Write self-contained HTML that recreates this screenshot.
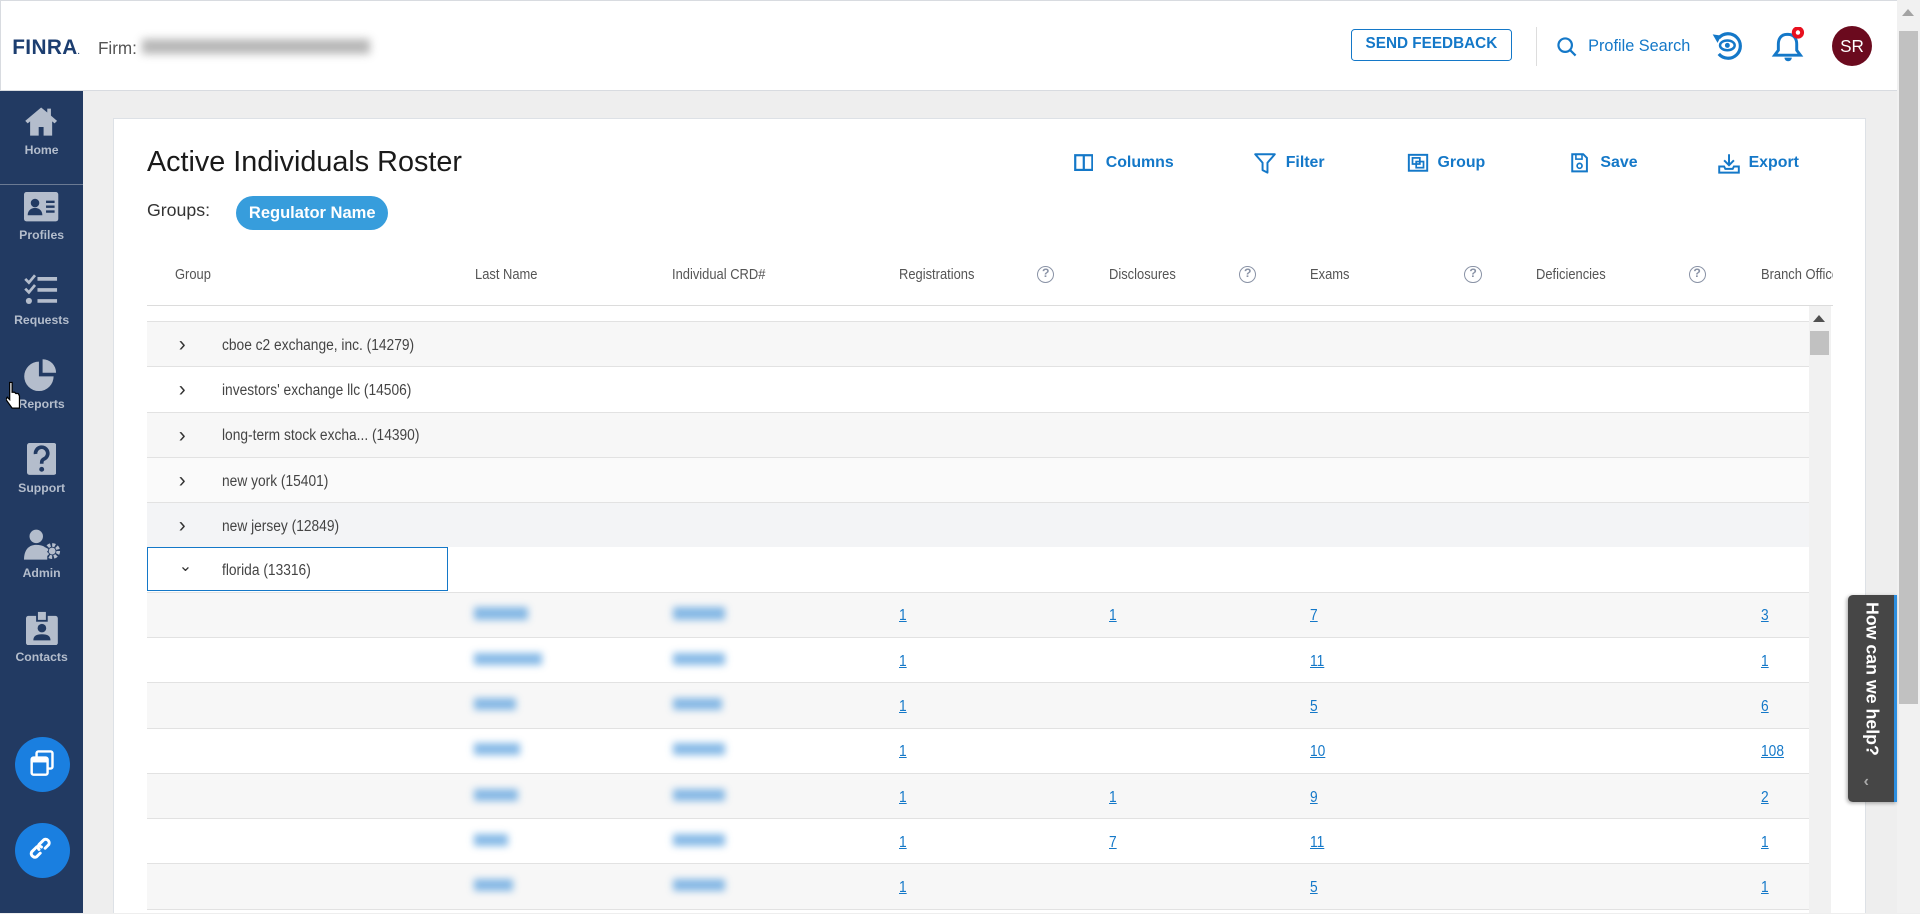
<!DOCTYPE html>
<html><head><meta charset="utf-8"><style>
*{box-sizing:border-box;margin:0;padding:0}
html,body{width:1920px;height:914px;overflow:hidden;background:#eee}
#z{zoom:1.2244898;width:1568px;height:746px;position:relative;font-family:"Liberation Sans",sans-serif;background:#eeeeee;overflow:hidden}
.a{position:absolute}
.hdr{left:0;top:0;width:1549px;height:74px;background:#fff;border-bottom:1px solid #d8dbe0;border-top:1px solid #d8dbe0;border-left:1px solid #d8dbe0}
.blue{color:#1478c8}
.side{left:0;top:74px;width:68px;height:672px;background:#223a62}
.nav{position:absolute;left:0;width:68px;text-align:center;color:#b4bdcc;font-size:10px;font-weight:bold}
.card{left:92px;top:96px;width:1432px;height:660px;background:#fff;border:1px solid #dde1e6}
.th{position:absolute;top:218px;font-size:12px;color:#555;transform:scaleX(.88);transform-origin:left;white-space:nowrap}
.q{position:absolute;top:217px;width:14px;height:14px;border:1.6px solid #8a93a6;border-radius:50%;font-size:10px;font-weight:bold;color:#8a93a6;text-align:center;line-height:11px}
.row{position:absolute;left:120px;width:1357px;height:37px;border-bottom:1px solid #e2e2e2;font-size:12.5px;color:#444}
.row .c{position:absolute;left:26px;top:9px;font-size:17px;color:#333}
.row .t{position:absolute;left:61px;top:12px;white-space:nowrap;transform:scaleX(.9);transform-origin:left}
.n{position:absolute;top:12px;color:#1478c8;text-decoration:underline;font-size:12.5px;transform:scaleX(.9);transform-origin:left}
.bl{position:absolute;top:12px;height:10px;background:#5fa3df;filter:blur(3px);opacity:.75}
.patch{position:absolute;left:267px;top:0;width:250px;height:37px;background:rgba(240,240,240,.5);filter:blur(3px)}
.tb{position:absolute;top:126px;font-size:13px;font-weight:bold;color:#1478c8}
</style></head><body><div id="z">
<!-- header -->
<div class="a hdr"></div>
<div class="a" style="left:10px;top:29px;font-size:17px;font-weight:bold;color:#1c3e70;letter-spacing:0.3px">FINRA<span style="font-size:6px">.</span></div>
<div class="a" style="left:80px;top:31px;font-size:14px;color:#555">Firm:</div>
<div class="a" style="left:116px;top:32px;width:186px;height:12px;background:#888;filter:blur(3.5px);opacity:.6"></div>
<div class="a" style="left:1103px;top:24px;width:132px;height:26px;border:1.5px solid #1478c8;border-radius:3px;color:#1478c8;font-size:12.5px;font-weight:bold;text-align:center;line-height:23px">SEND FEEDBACK</div>
<div class="a" style="left:1254px;top:22px;width:1px;height:32px;background:#ddd"></div>
<svg class="a" style="left:1271px;top:29px" width="18" height="18" viewBox="0 0 18 18"><circle cx="7.5" cy="7.5" r="5.5" fill="none" stroke="#1478c8" stroke-width="1.8"/><path d="M11.5 11.5L16 16" stroke="#1478c8" stroke-width="1.8"/></svg>
<div class="a blue" style="left:1297px;top:30px;font-size:13.3px">Profile Search</div>
<svg class="a" style="left:1396px;top:22px" width="30" height="30" viewBox="0 0 30 30"><path d="M8 9A10 10 0 1 1 8 22" fill="none" stroke="#1478c8" stroke-width="2.6"/><path d="M3 6l7 1-3 6z" fill="#1478c8"/><ellipse cx="15" cy="15" rx="6" ry="4" fill="none" stroke="#1478c8" stroke-width="2"/><circle cx="15" cy="15" r="2" fill="#1478c8"/></svg>
<svg class="a" style="left:1446px;top:22px" width="30" height="30" viewBox="0 0 30 30"><path d="M13 6c-5 0-7 4-7 8v5l-3 4h21l-3-4v-5c0-4-2-8-7-8z" fill="none" stroke="#1478c8" stroke-width="2.4"/><path d="M11 25a3 3 0 0 0 6 0z" fill="#1478c8"/><circle cx="22" cy="4.5" r="5" fill="#e8101e"/><circle cx="22" cy="4.5" r="1.8" fill="#fff"/></svg>
<div class="a" style="left:1496px;top:21px;width:33px;height:33px;border-radius:50%;background:#6b0a1e;color:#fff;font-size:14px;text-align:center;line-height:33px">SR</div>
<!-- window scrollbar -->
<div class="a" style="left:1549px;top:0;width:19px;height:746px;background:#f1f1f1"></div>
<div class="a" style="left:1551px;top:25px;width:15px;height:550px;background:#c1c1c1"></div>
<div class="a" style="left:1553px;top:7px;width:0;height:0;border-left:5px solid transparent;border-right:5px solid transparent;border-bottom:6px solid #a3a3a3"></div>
<!-- sidebar -->
<div class="a side"></div>
<svg class="a" style="left:20px;top:86px" width="28" height="26" viewBox="0 0 28 26"><path d="M14 2L1 13l2 2 2-1.6V25h7v-7h4v7h7V13.4l2 1.6 2-2-5-4.3V3h-3v3.1z" fill="#b4bdcc"/></svg>
<div class="nav" style="top:117px">Home</div>
<div class="a" style="left:0;top:150px;width:68px;height:1px;background:#6b7a93"></div>
<svg class="a" style="left:20px;top:157px" width="28" height="24" viewBox="0 0 28 24"><rect width="28" height="24" rx="2" fill="#b4bdcc"/><circle cx="9" cy="9" r="3.5" fill="#223a62"/><path d="M3 19c0-4 3-6 6-6s6 2 6 6z" fill="#223a62"/><path d="M18 8h7M18 12h7M18 16h7" stroke="#223a62" stroke-width="2"/></svg>
<div class="nav" style="top:186px">Profiles</div>
<svg class="a" style="left:20px;top:224px" width="28" height="26" viewBox="0 0 28 26"><path d="M1 4l3 3 5-6M1 12l3 3 5-6" fill="none" stroke="#b4bdcc" stroke-width="2.2"/><circle cx="4" cy="22" r="2.5" fill="#b4bdcc"/><path d="M11 4h16M11 13h16M11 22h16" stroke="#b4bdcc" stroke-width="3"/></svg>
<div class="nav" style="top:256px">Requests</div>
<svg class="a" style="left:19px;top:292px" width="30" height="28" viewBox="0 0 30 28"><path d="M13 3A12 12 0 1 0 25 15H13z" fill="#b4bdcc"/><path d="M16 1v11h11A11 11 0 0 0 16 1z" fill="#b4bdcc"/></svg>
<div class="nav" style="top:324px">Reports</div>
<svg class="a" style="left:5px;top:310px" width="12" height="26" viewBox="0 0 12 26"><path d="M3 2v14l-2-2-1 2 5 7h6v-10l-1-2-2 0-1-1-2 0V2z" fill="#fff" stroke="#000" stroke-width="1"/></svg>
<svg class="a" style="left:22px;top:362px" width="24" height="26" viewBox="0 0 24 26"><rect width="24" height="26" rx="2" fill="#b4bdcc"/><path d="M7 9a5 5 0 1 1 7 4c-2 1-2 2-2 4" fill="none" stroke="#223a62" stroke-width="3"/><circle cx="12" cy="21.5" r="2" fill="#223a62"/></svg>
<div class="nav" style="top:393px">Support</div>
<svg class="a" style="left:20px;top:432px" width="30" height="26" viewBox="0 0 30 26"><circle cx="10" cy="6" r="5.5" fill="#b4bdcc"/><path d="M0 25c0-8 4-12 10-12s8 2 9 5v7z" fill="#b4bdcc"/><circle cx="23" cy="18" r="5" fill="none" stroke="#b4bdcc" stroke-width="3" stroke-dasharray="2.5 1.4"/><circle cx="23" cy="18" r="2.8" fill="#b4bdcc"/></svg>
<div class="nav" style="top:462px">Admin</div>
<svg class="a" style="left:21px;top:499px" width="26" height="28" viewBox="0 0 26 28"><rect y="4" width="26" height="24" rx="2" fill="#b4bdcc"/><rect x="9" y="0" width="8" height="8" fill="#b4bdcc" stroke="#223a62" stroke-width="1.5"/><circle cx="13" cy="14" r="3.5" fill="#223a62"/><path d="M6 24c0-4 3-5 7-5s7 1 7 5z" fill="#223a62"/></svg>
<div class="nav" style="top:531px">Contacts</div>
<div class="a" style="left:12px;top:602px;width:45px;height:45px;border-radius:50%;background:#1a7fe0"></div>
<svg class="a" style="left:23px;top:612px" width="24" height="24" viewBox="0 0 24 24"><rect x="7" y="2" width="13" height="14" rx="1.5" fill="none" stroke="#fff" stroke-width="2"/><rect x="3" y="7" width="13" height="14" rx="1.5" fill="#1a7fe0" stroke="#fff" stroke-width="2"/><rect x="3" y="7" width="13" height="4" fill="#fff"/></svg>
<div class="a" style="left:12px;top:672px;width:45px;height:45px;border-radius:50%;background:#1a7fe0"></div>
<svg class="a" style="left:23px;top:683px" width="24" height="24" viewBox="0 0 24 24"><g fill="none" stroke="#fff" stroke-width="2.4" stroke-linecap="round"><path d="M10 14l-3 3a3 3 0 0 1-4-4l4-4a3 3 0 0 1 4 0"/><path d="M14 10l3-3a3 3 0 0 0-4-4l-4 4a3 3 0 0 0 0 4"/></g></svg>
<!-- card -->
<div class="a card"></div>
<div class="a" style="left:120px;top:119px;font-size:23.5px;color:#1a1a1a">Active Individuals Roster</div>
<svg class="a" style="left:877px;top:126px" width="16" height="14" viewBox="0 0 16 14"><rect x="1" y="1" width="14" height="12" fill="none" stroke="#1478c8" stroke-width="1.8"/><path d="M8 1v12" stroke="#1478c8" stroke-width="1.8"/></svg>
<div class="tb" style="left:903px">Columns</div>
<svg class="a" style="left:1024px;top:125px" width="18" height="17" viewBox="0 0 18 17"><path d="M1 1h16l-6 7v8l-4-2V8z" fill="none" stroke="#1478c8" stroke-width="1.6" stroke-linejoin="round"/></svg>
<div class="tb" style="left:1050px">Filter</div>
<svg class="a" style="left:1149px;top:125px" width="18" height="16" viewBox="0 0 18 16"><rect x="1.5" y="1.5" width="15" height="13" fill="none" stroke="#1478c8" stroke-width="1.6"/><rect x="4.5" y="4" width="6" height="5" fill="none" stroke="#1478c8" stroke-width="1.4"/><rect x="7.5" y="7" width="6" height="5" fill="none" stroke="#1478c8" stroke-width="1.4"/></svg>
<div class="tb" style="left:1174px">Group</div>
<svg class="a" style="left:1283px;top:125px" width="14" height="16" viewBox="0 0 14 16"><path d="M1 1h9l3 3v11H1z" fill="none" stroke="#1478c8" stroke-width="1.6"/><rect x="4" y="1" width="5" height="4" fill="none" stroke="#1478c8" stroke-width="1.3"/><circle cx="7" cy="10.5" r="2" fill="none" stroke="#1478c8" stroke-width="1.4"/></svg>
<div class="tb" style="left:1307px">Save</div>
<svg class="a" style="left:1403px;top:125px" width="18" height="17" viewBox="0 0 18 17"><path d="M9 1v8M5 6l4 4 4-4" fill="none" stroke="#1478c8" stroke-width="1.6"/><path d="M1 11h4l1 2h6l1-2h4v5H1z" fill="none" stroke="#1478c8" stroke-width="1.6"/></svg>
<div class="tb" style="left:1428px">Export</div>
<div class="a" style="left:120px;top:163px;font-size:14.5px;color:#333">Groups:</div>
<div class="a" style="left:193px;top:160px;width:124px;height:28px;border-radius:14px;background:#379ddc;color:#fff;font-size:13.5px;font-weight:bold;text-align:center;line-height:28px">Regulator Name</div>
<!-- table header -->
<div class="th" style="left:143px">Group</div>
<div class="th" style="left:388px">Last Name</div>
<div class="th" style="left:549px">Individual CRD#</div>
<div class="th" style="left:734px">Registrations</div><div class="q" style="left:847px">?</div>
<div class="th" style="left:906px">Disclosures</div><div class="q" style="left:1012px">?</div>
<div class="th" style="left:1070px">Exams</div><div class="q" style="left:1196px">?</div>
<div class="th" style="left:1254px">Deficiencies</div><div class="q" style="left:1379px">?</div>
<div class="a" style="left:1438px;top:218px;width:59px;overflow:hidden;white-space:nowrap;font-size:12px;color:#555"><span style="display:inline-block;transform:scaleX(.88);transform-origin:left">Branch Offices</span></div>
<div class="a" style="left:120px;top:249px;width:1377px;height:1px;background:#dcdcdc"></div>
<div class="a" style="left:120px;top:250px;width:1357px;height:13px;border-bottom:1px solid #e2e2e2;background:#fff"></div>
<!-- rows -->
<div class="row" style="top:263px;background:#f7f7f7"><span class="c">&rsaquo;</span><span class="t">cboe c2 exchange, inc. (14279)</span></div>
<div class="row" style="top:300px;background:#fff"><span class="c">&rsaquo;</span><span class="t">investors' exchange llc (14506)</span></div>
<div class="row" style="top:337px;background:#f7f7f7"><span class="c">&rsaquo;</span><span class="t">long-term stock excha... (14390)</span></div>
<div class="row" style="top:374px;background:#fafafa"><span class="c">&rsaquo;</span><span class="t">new york (15401)</span></div>
<div class="row" style="top:411px;background:#f3f4f6"><span class="c">&rsaquo;</span><span class="t">new jersey (12849)</span></div>
<div class="row" style="top:447px;background:#fff;height:37px"><span class="c" style="top:7px;font-size:13px">&#8964;</span><span class="t">florida (13316)</span></div>
<div class="a" style="left:120px;top:447px;width:246px;height:36px;border:1px solid #1478c8"></div>
<div class="row" style="top:484px;background:#f7f7f7"><i class="bl" style="left:267px;width:44px"></i><i class="bl" style="left:430px;width:42px"></i><a class="n" style="left:614px">1</a><a class="n" style="left:786px">1</a><a class="n" style="left:950px">7</a><a class="n" style="left:1318px">3</a></div>
<div class="row" style="top:521px;background:#fff"><i class="bl" style="left:267px;width:56px"></i><i class="bl" style="left:430px;width:42px"></i><a class="n" style="left:614px">1</a><a class="n" style="left:950px">11</a><a class="n" style="left:1318px">1</a></div>
<div class="row" style="top:558px;background:#f7f7f7"><i class="bl" style="left:267px;width:34px"></i><i class="bl" style="left:430px;width:40px"></i><a class="n" style="left:614px">1</a><a class="n" style="left:950px">5</a><a class="n" style="left:1318px">6</a></div>
<div class="row" style="top:595px;background:#fff"><i class="bl" style="left:267px;width:38px"></i><i class="bl" style="left:430px;width:42px"></i><a class="n" style="left:614px">1</a><a class="n" style="left:950px">10</a><a class="n" style="left:1318px">108</a></div>
<div class="row" style="top:632px;background:#f7f7f7"><i class="bl" style="left:267px;width:36px"></i><i class="bl" style="left:430px;width:42px"></i><a class="n" style="left:614px">1</a><a class="n" style="left:786px">1</a><a class="n" style="left:950px">9</a><a class="n" style="left:1318px">2</a></div>
<div class="row" style="top:669px;background:#fff"><i class="bl" style="left:267px;width:28px"></i><i class="bl" style="left:430px;width:42px"></i><a class="n" style="left:614px">1</a><a class="n" style="left:786px">7</a><a class="n" style="left:950px">11</a><a class="n" style="left:1318px">1</a></div>
<div class="row" style="top:706px;background:#f7f7f7"><i class="bl" style="left:267px;width:32px"></i><i class="bl" style="left:430px;width:42px"></i><a class="n" style="left:614px">1</a><a class="n" style="left:950px">5</a><a class="n" style="left:1318px">1</a></div>
<!-- inner scrollbar -->
<div class="a" style="left:1477px;top:250px;width:18px;height:496px;background:#f1f1f1"></div>
<div class="a" style="left:1481px;top:257px;width:0;height:0;border-left:5px solid transparent;border-right:5px solid transparent;border-bottom:6px solid #505050"></div>
<div class="a" style="left:1478px;top:270px;width:16px;height:20px;background:#c1c1c1"></div>
<!-- help tab -->
<div class="a" style="left:1509px;top:486px;width:40px;height:169px;background:#464646;border-radius:4px 0 0 4px;border-right:3px solid #2b8ee0;box-shadow:-1px 1px 3px rgba(0,0,0,.3)"></div>
<div class="a" style="left:1518px;top:492px;width:22px;height:140px;writing-mode:vertical-rl;color:#fff;font-weight:bold;font-size:14.5px;line-height:22px">How can we help?</div>
<div class="a" style="left:1522px;top:631px;color:#aaa;font-size:13px;font-weight:bold">&lsaquo;</div>
</div></body></html>
